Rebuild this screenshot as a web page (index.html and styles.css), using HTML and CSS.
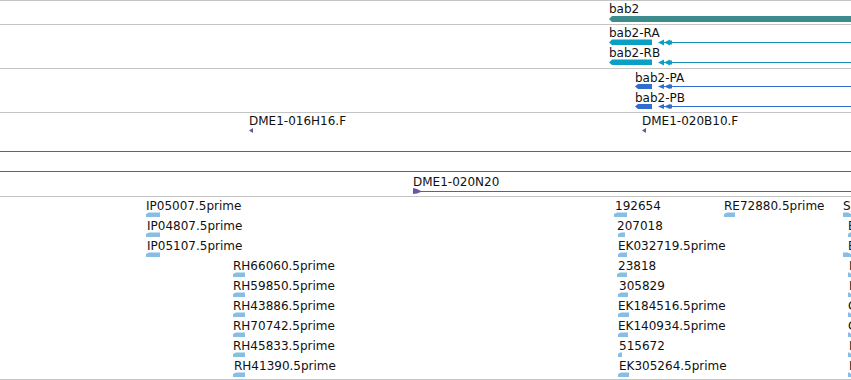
FILE: index.html
```html
<!DOCTYPE html>
<html lang="en">
<head>
    <meta charset="UTF-8">
    <title>bab2 region</title>
    <link rel="stylesheet" href="styles.css">
</head>
<body>
    <div id="tracks">
        <!-- gene -->
        <div class="track track-gene">
            <svg class="canvas" viewBox="0 1 851 23" width="851" height="23">
                <text class="label" x="609" y="13">bab2</text>
                <polygon class="gene" points="609,19 612,16 851,16 851,22 612,22"/>
            </svg>
        </div>

        <!-- transcripts -->
        <div class="track track-mrna">
            <svg class="canvas" viewBox="0 25 851 43" width="851" height="43">
                <text class="label" x="609" y="37">bab2-RA</text>
                <rect class="mrna-line" x="660" y="42" width="191" height="1"/>
                <polygon class="mrna" points="609,42.5 612,39.5 652,39.5 652,45 612,45"/>
                <polygon class="mrna" points="658,42.5 664,39.5 664,45.5"/>
                <polygon class="mrna" points="664,42.5 670,39.5 670,45.5"/>
                <rect class="mrna" x="670" y="40.5" width="2" height="4"/>

                <text class="label" x="609" y="57">bab2-RB</text>
                <rect class="mrna-line" x="660" y="62" width="191" height="1"/>
                <polygon class="mrna" points="609,62.5 612,59.5 652,59.5 652,65 612,65"/>
                <polygon class="mrna" points="658,62.5 664,59.5 664,65.5"/>
                <polygon class="mrna" points="664,62.5 670,59.5 670,65.5"/>
                <rect class="mrna" x="670" y="60.5" width="2" height="4"/>
            </svg>
        </div>

        <!-- proteins -->
        <div class="track track-cds">
            <svg class="canvas" viewBox="0 69 851 43" width="851" height="43">
                <text class="label" x="635" y="82">bab2-PA</text>
                <rect class="cds-line" x="660" y="86" width="191" height="1"/>
                <polygon class="cds" points="635,86.5 638,84 652,84 652,89 638,89"/>
                <polygon class="cds" points="658,86.5 664,84 664,89"/>
                <polygon class="cds" points="664,86.5 670,84 670,89"/>
                <rect class="cds" x="670" y="84.5" width="2" height="4"/>

                <text class="label" x="635" y="102">bab2-PB</text>
                <rect class="cds-line" x="660" y="106" width="191" height="1"/>
                <polygon class="cds" points="635,106.5 638,104 652,104 652,109 638,109"/>
                <polygon class="cds" points="658,106.5 664,104 664,109"/>
                <polygon class="cds" points="664,106.5 670,104 670,109"/>
                <rect class="cds" x="670" y="104.5" width="2" height="4"/>
            </svg>
        </div>

        <!-- BAC ends -->
        <div class="track track-bac">
            <svg class="canvas" viewBox="0 113 851 83" width="851" height="83">
                <text class="label" x="249" y="125">DME1-016H16.F</text>
                <polygon class="bac" points="249,130.5 253,128 253,133"/>
                <text class="label" x="642" y="125">DME1-020B10.F</text>
                <polygon class="bac" points="642,130.5 646,128 646,133"/>

                <rect class="bac" x="0" y="151" width="851" height="1"/>
                <rect class="bac" x="0" y="171" width="851" height="1"/>

                <text class="label" x="413" y="186">DME1-020N20</text>
                <polygon class="bac" points="413,188 417,189 422,191.5 417,193.5 413,194"/>
                <rect class="bac" x="420" y="191" width="431" height="1"/>
            </svg>
        </div>

        <!-- ESTs -->
        <div class="track track-est">
            <svg class="canvas" id="est" viewBox="0 197 851 182" width="851" height="182"></svg>
        </div>
    </div>

    <script>
        var NS = "http://www.w3.org/2000/svg";
        // [row, label x, label, glyph x, glyph width, strand]
        var ests = [
            [0, 146, "IP05007.5prime", 146, 14, -1],
            [1, 147, "IP04807.5prime", 146, 14, -1],
            [2, 147, "IP05107.5prime", 146, 14, -1],
            [3, 233, "RH66060.5prime", 233, 12, -1],
            [4, 233, "RH59850.5prime", 233, 12, -1],
            [5, 233, "RH43886.5prime", 233, 12, -1],
            [6, 233, "RH70742.5prime", 233, 12, -1],
            [7, 233, "RH45833.5prime", 233, 12, -1],
            [8, 234, "RH41390.5prime", 233, 12, -1],
            [0, 615, "192654", 614, 13, -1],
            [1, 617, "207018", 618, 7, -1],
            [2, 618, "EK032719.5prime", 618, 9, -1],
            [3, 618, "23818", 617, 10, -1],
            [4, 619, "305829", 618, 10, -1],
            [5, 618, "EK184516.5prime", 618, 11, -1],
            [6, 618, "EK140934.5prime", 618, 10, -1],
            [7, 619, "515672", 618, 4, -1],
            [8, 619, "EK305264.5prime", 618, 11, -1],
            [0, 724, "RE72880.5prime", 724, 11, -1],
            [0, 843, "SD08472.5prime", 843, 8, 1],
            [1, 848, "EK062251.5prime", 848, 4, -1],
            [2, 848, "EK110437.5prime", 843, 8, 1],
            [3, 849, "LD24168.5prime", 848, 3, 1],
            [4, 849, "LD31552.5prime", 848, 3, 1],
            [5, 848, "GH01275.5prime", 848, 3, 1],
            [6, 848, "GH13388.5prime", 848, 3, 1],
            [7, 849, "LD41903.5prime", 848, 3, 1],
            [8, 849, "LD45117.5prime", 848, 3, 1]
        ];

        var svg = document.getElementById("est");
        ests.forEach(function (e) {
            var base = 210 + e[0] * 20;
            var top = base + 2.5;
            var x = e[3], w = e[4];

            var t = document.createElementNS(NS, "text");
            t.setAttribute("class", "label");
            t.setAttribute("x", e[1]);
            t.setAttribute("y", base);
            t.textContent = e[2];
            svg.appendChild(t);

            var pts;
            var tip = Math.min(3, w / 2);
            if (e[5] < 0) {
                pts = [x, top + 1.5, x + tip, top, x + w, top, x + w, top + 4.5, x, top + 4.5];
            } else {
                pts = [x, top, x + w - tip, top, x + w, top + 1.5, x + w, top + 4.5, x, top + 4.5];
            }
            var p = document.createElementNS(NS, "polygon");
            p.setAttribute("class", "est");
            p.setAttribute("points", pts.join(","));
            svg.appendChild(p);
        });
    </script>
</body>
</html>
```

FILE: styles.css
```css
body {
    margin: 0;
    padding: 0;
    width: 851px;
    height: 380px;
    overflow: hidden;
    background: #fff;
    font-family: "DejaVu Sans", Verdana, sans-serif;
}

#tracks {
    display: flex;
    flex-direction: column;
}

.track {
    border-top: 1px solid #c4c4c4;
    overflow: hidden;
}

.track-gene { height: 23px; }
.track-mrna { height: 43px; }
.track-cds { height: 43px; }
.track-bac { height: 83px; }

.track-est {
    height: 182px;
    border-bottom: 1px solid #c4c4c4;
}

.canvas {
    display: block;
}

.label {
    font-family: "DejaVu Sans", Verdana, sans-serif;
    font-size: 12px;
    fill: #111;
}

.gene {
    fill: #3c8c8e;
}

.mrna {
    fill: #0aa0c4;
}

.mrna-line {
    fill: #1591bb;
}

.cds {
    fill: #316dd0;
}

.cds-line {
    fill: #316dd0;
}

.bac {
    fill: #6c55a6;
}

.est {
    fill: #88bee3;
}
```
